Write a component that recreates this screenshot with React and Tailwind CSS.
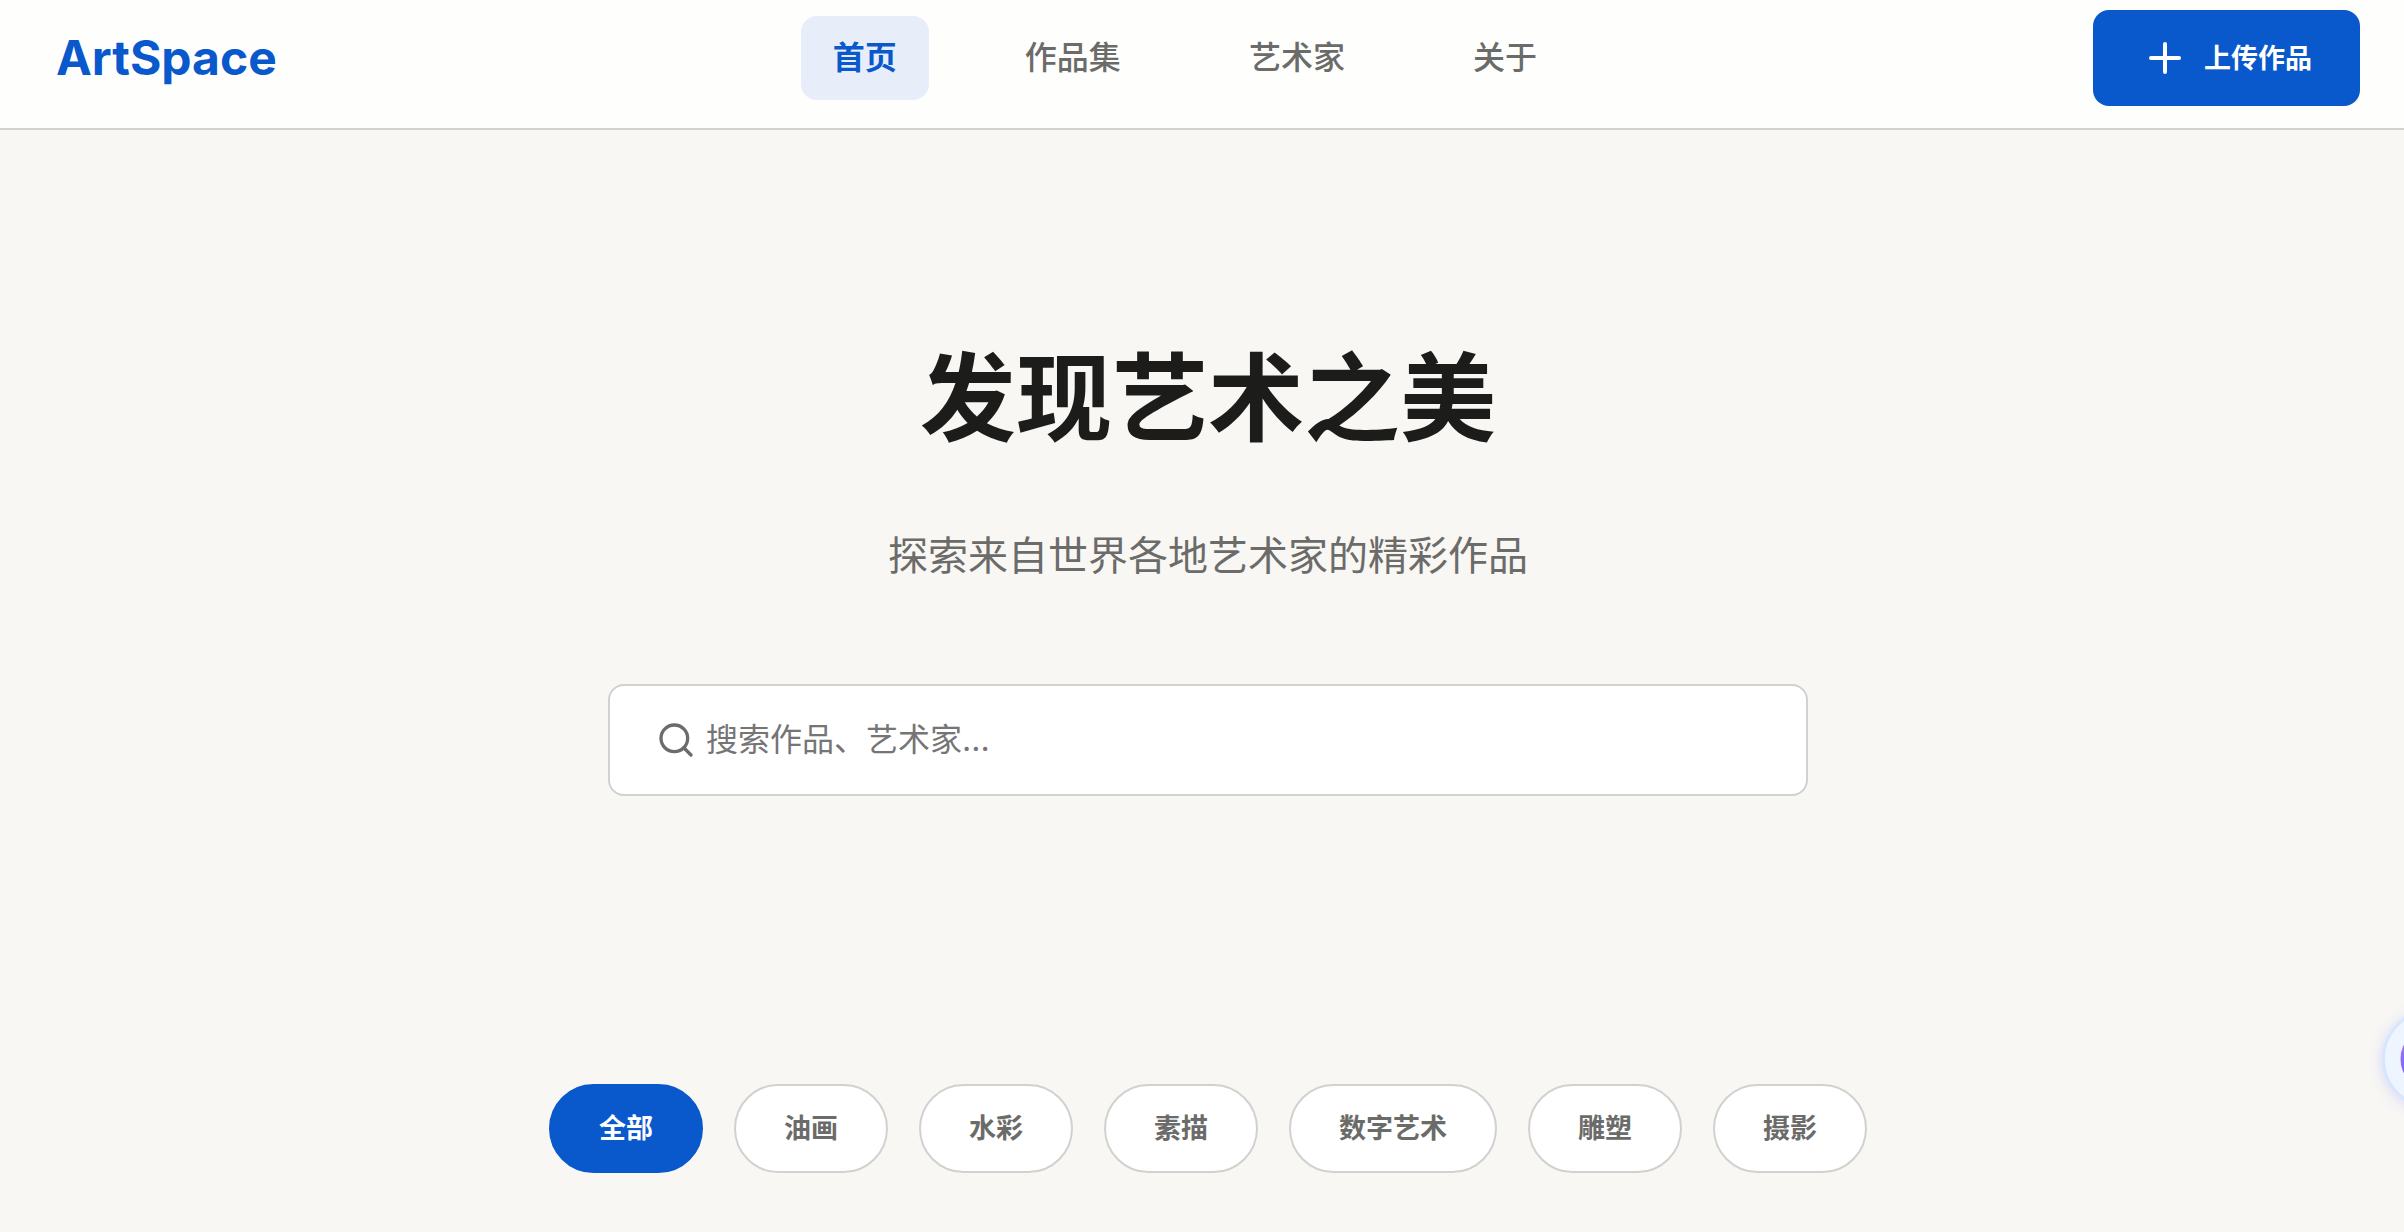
import React, { useState } from "react";
import { Plus, Search } from "lucide-react";

const links = ["首页", "作品集", "艺术家", "关于"];
const categories = ["全部", "油画", "水彩", "素描", "数字艺术", "雕塑", "摄影"];

function Header() {
  return (
    <header className="flex items-center justify-between border-b-2 border-[#d1d1cf] bg-[#fefefd] px-14 pt-2.5 pb-[22px]">
      <a href="#home" className="text-5xl font-bold text-[#0958cc]">ArtSpace</a>
      <nav className="flex items-center gap-16">
        {links.map((label, i) => (
          <a
            key={label}
            href={"#" + label}
            className={
              "rounded-2xl px-8 py-4 text-[32px] leading-[52px] " +
              (i === 0 ? "bg-[#e7eefa] font-bold text-[#0958cc]" : "font-medium text-[#6b6b69]")
            }
          >
            {label}
          </a>
        ))}
      </nav>
      <button type="button" className="flex h-24 items-center gap-[15px] rounded-2xl bg-[#0958cc] px-12 text-[27px] font-bold text-white">
        <Plus size={48} />
        <span className="pt-0.5">上传作品</span>
      </button>
    </header>
  );
}

function Hero() {
  return (
    <section className="flex flex-col items-center px-14 pt-[188px] text-center">
      <h1 className="text-[96px] leading-[160px] font-bold text-[#1c1c1a]">发现艺术之美</h1>
      <p className="mt-[46px] text-[40px] leading-[64px] text-[#6b6b69]">探索来自世界各地艺术家的精彩作品</p>
      <label className="mt-24 flex h-28 w-full max-w-[1200px] items-center gap-2.5 rounded-2xl border-2 border-[#d1d1cf] bg-white px-[46px]">
        <Search size={40} className="shrink-0 text-[#6b6b69]" aria-hidden="true" />
        <input
          type="text"
          aria-label="搜索"
          placeholder="搜索作品、艺术家..."
          className="min-w-0 flex-1 bg-transparent text-[32px] leading-[48px] text-[#1c1c1a] outline-none placeholder:text-[#757575]"
        />
      </label>
    </section>
  );
}

function Filters() {
  const [active, setActive] = useState("全部");
  return (
    <section className="flex flex-wrap justify-center gap-[31px] px-14 pt-72 pb-14">
      {categories.map((name) => (
        <button
          key={name}
          type="button"
          aria-pressed={active === name}
          onClick={() => setActive(name)}
          className={
            "h-[89px] rounded-full border-2 px-12 pt-0.5 text-[27px] font-bold " +
            (active === name
              ? "border-[#0958cc] bg-[#0958cc] text-white"
              : "border-[#d1d1cf] bg-white text-[#6b6b69]")
          }
        >
          {name}
        </button>
      ))}
    </section>
  );
}

function AssistantBubble() {
  return (
    <button
      type="button"
      aria-label="助手"
      className="fixed top-[1009px] -right-[78px] flex size-[100px] items-center justify-center rounded-full border-[3px] border-[#d6e6ff] bg-[#eff5ff] shadow-[0_2px_14px_rgba(120,120,255,0.25)]"
    >
      <svg viewBox="0 0 64 64" className="size-16" aria-hidden="true">
        <defs>
          <linearGradient id="ring" x1="0" y1="0" x2="0" y2="1">
            <stop offset="0" stopColor="#a881f5" />
            <stop offset="1" stopColor="#6b5cf6" />
          </linearGradient>
        </defs>
        <circle cx="32" cy="32" r="29.5" fill="#b9a2fb" stroke="url(#ring)" strokeWidth="4" />
      </svg>
    </button>
  );
}

export default function App() {
  return (
    <div className="min-h-screen overflow-x-hidden bg-[#f8f7f4] font-['Inter','Noto_Sans_CJK_SC',sans-serif]">
      <div className="-mr-3">
        <Header />
        <main>
          <Hero />
          <Filters />
        </main>
      </div>
      <AssistantBubble />
    </div>
  );
}
